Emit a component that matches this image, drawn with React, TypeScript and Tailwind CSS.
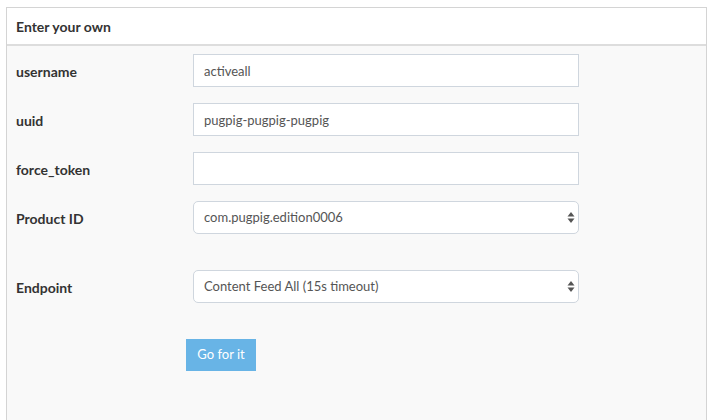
export default function App() {
  return (
    <div className="min-h-[420px] bg-white pl-[6px] pr-[5px] pt-[7px] font-['Lato','Open_Sans',sans-serif] text-[13px] text-[#333]">
      <div className="flex min-h-[413px] flex-col border-x border-t border-[#d4d4d4]">
        {/* Panel header */}
        <div className="flex h-[38px] items-center border-b-2 border-[#dddddd] bg-white pl-[9px] text-[14px] font-bold">
          Enter your own
        </div>

        {/* Form body */}
        <div className="flex flex-1 flex-col bg-[#f9f9f9] pl-[9px] pt-[8px]">
          <FormRow label="username">
            <TextInput value="activeall" />
          </FormRow>
          <FormRow label="uuid" className="mt-4">
            <TextInput value="pugpig-pugpig-pugpig" />
          </FormRow>
          <FormRow label="force_token" className="mt-4">
            <TextInput value="" />
          </FormRow>
          <FormRow label="Product ID" className="mt-4">
            <Select value="com.pugpig.edition0006" />
          </FormRow>
          <FormRow label="Endpoint" className="mt-[36px]">
            <Select value="Content Feed All (15s timeout)" />
          </FormRow>

          <div className="mt-[36px] pl-[170px]">
            <button className="h-[32px] w-[70px] bg-[#68b4e6] text-[13px] text-white">
              Go for it
            </button>
          </div>
        </div>
      </div>
    </div>
  );
}

function FormRow({
  label,
  className = "",
  children,
}: {
  label: string;
  className?: string;
  children: React.ReactNode;
}) {
  return (
    <div className={`flex h-[33px] items-center ${className}`}>
      <label className="w-[177px] shrink-0 pt-px text-[14px] font-bold text-[#333]">{label}</label>
      {children}
    </div>
  );
}

function TextInput({ value }: { value: string }) {
  return (
    <input
      type="text"
      defaultValue={value}
      className="h-[33px] w-[386px] border border-[#cfd6de] bg-white px-[10px] text-[13px] text-[#555] outline-none"
    />
  );
}

function Select({ value }: { value: string }) {
  return (
    <div className="relative h-[33px] w-[386px]">
      <div className="flex h-full w-full items-center rounded-[5px] border border-[#cfd6de] bg-white px-[10px] text-[13px] text-[#555]">
        {value}
      </div>
      <svg
        className="absolute right-[4px] top-[11px]"
        width="8"
        height="11"
        viewBox="0 0 8 11"
        fill="#555"
      >
        <path d="M4 0 L7.5 4.5 L0.5 4.5 Z" />
        <path d="M4 11 L7.5 6.5 L0.5 6.5 Z" />
      </svg>
    </div>
  );
}
